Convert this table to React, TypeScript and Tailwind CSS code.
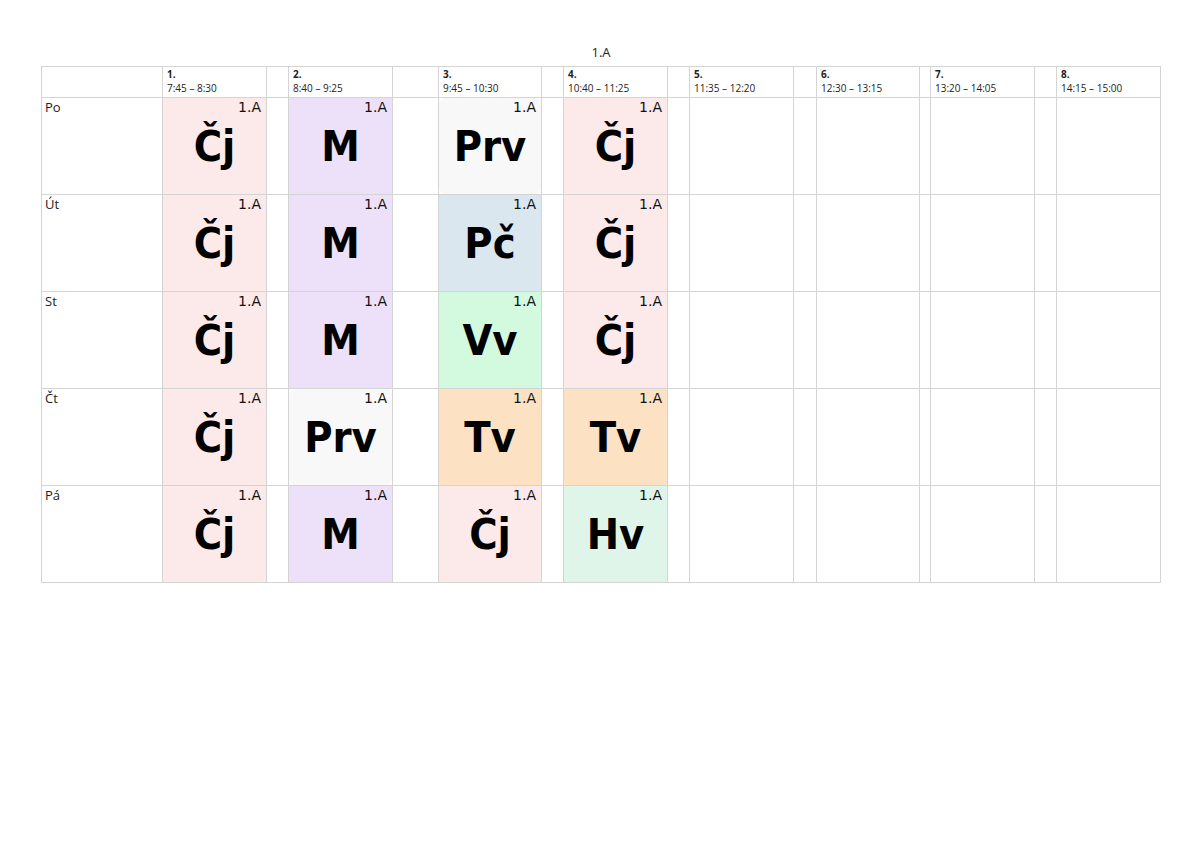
import React from "react";

const cols = [121, 104, 22, 104, 46, 103, 22, 104, 22, 104, 23, 103, 11, 104, 22, 104];

const periods = [
  { n: "1.", t: "7:45 – 8:30" },
  { n: "2.", t: "8:40 – 9:25" },
  { n: "3.", t: "9:45 – 10:30" },
  { n: "4.", t: "10:40 – 11:25" },
  { n: "5.", t: "11:35 – 12:20" },
  { n: "6.", t: "12:30 – 13:15" },
  { n: "7.", t: "13:20 – 14:05" },
  { n: "8.", t: "14:15 – 15:00" },
];

const colors: Record<string, string> = {
  "Čj": "bg-[#fce9e9]",
  M: "bg-[#ede1fa]",
  Prv: "bg-[#f8f8f8] rounded-[6px]",
  "Pč": "bg-[#dbe7ee]",
  Vv: "bg-[#d3fadf]",
  Tv: "bg-[#fde1c3]",
  Hv: "bg-[#dff5e9]",
};

const days: { d: string; s: string[] }[] = [
  { d: "Po", s: ["Čj", "M", "Prv", "Čj"] },
  { d: "Út", s: ["Čj", "M", "Pč", "Čj"] },
  { d: "St", s: ["Čj", "M", "Vv", "Čj"] },
  { d: "Čt", s: ["Čj", "Prv", "Tv", "Tv"] },
  { d: "Pá", s: ["Čj", "M", "Čj", "Hv"] },
];

const cellB = "border-r border-b border-[#d4d4d4]";

export default function App() {
  const template = cols.map((c) => `${c}px`).join(" ");
  return (
    <div className="w-[1200px] h-[848px] bg-white pt-[44px] pl-[41px]" style={{ fontFamily: "'Open Sans', 'Noto Sans', sans-serif" }}>
      <div className="w-[1120px] h-[22px] text-center text-[13px] leading-[16px] text-[#222]">1.A</div>
      <div
        className="grid w-[1120px] border-l border-t border-[#d4d4d4]"
        style={{ gridTemplateColumns: template, gridTemplateRows: "31px repeat(5, 97px)" }}
      >
        <div className={cellB} />
        {periods.map((p, i) => (
          <React.Fragment key={p.n}>
            <div className={`${cellB} pl-[4px] pt-[1px] text-[#222]`}>
              <div className="text-[10px] leading-[13px] font-bold">{p.n}</div>
              <div className="text-[10px] leading-[15px] whitespace-nowrap">{p.t}</div>
            </div>
            {i < periods.length - 1 && <div className={cellB} />}
          </React.Fragment>
        ))}
        {days.map((day) => (
          <React.Fragment key={day.d}>
            <div className={`${cellB} pl-[3px] pt-[1px] text-[13px] leading-[16px] text-[#222]`}>{day.d}</div>
            {periods.map((p, i) => {
              const s = day.s[i];
              return (
                <React.Fragment key={p.n}>
                  {s ? (
                    <div className={`${cellB} relative flex flex-col`}>
                      <div className={`absolute inset-0 ${colors[s]}`} />
                      <div
                        className="relative text-right pr-[5px] pt-[1px] text-[14px] leading-[16px] text-[#111]"
                        style={{ fontFamily: "'DejaVu Sans', sans-serif" }}
                      >
                        1.A
                      </div>
                      <div
                        className="relative flex-1 flex items-center justify-center pb-[18px] text-[43px] leading-[44px] font-bold text-black"
                        style={{ fontFamily: "'DejaVu Sans Condensed', 'DejaVu Sans', sans-serif", fontStretch: "condensed" }}
                      >
                        {s}
                      </div>
                    </div>
                  ) : (
                    <div className={cellB} />
                  )}
                  {i < periods.length - 1 && <div className={cellB} />}
                </React.Fragment>
              );
            })}
          </React.Fragment>
        ))}
      </div>
    </div>
  );
}
